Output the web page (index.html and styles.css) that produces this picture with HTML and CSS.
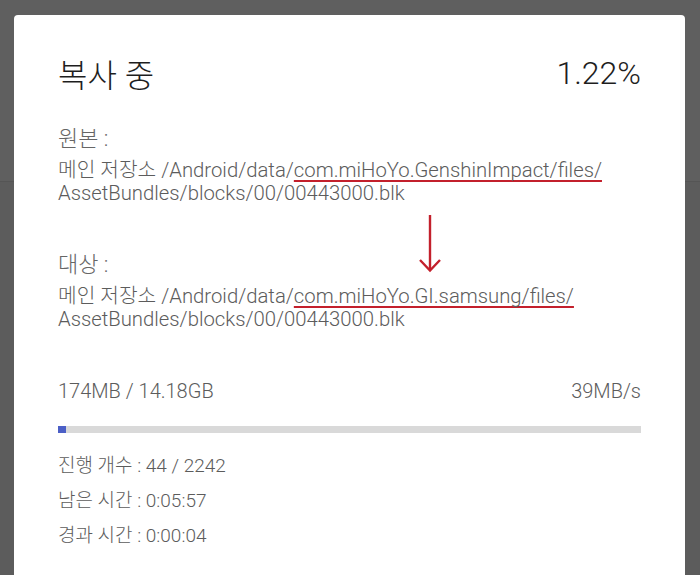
FILE: index.html
```html
<!DOCTYPE html>
<html lang="ko">
<head>
  <meta charset="UTF-8">
  <title>복사 중</title>
  <meta name="viewport" content="width=device-width, initial-scale=1.0">
  <link rel="stylesheet" href="styles.css">
</head>
<body>
<div class="dialog">
  <div class="head">
    <div class="title">복사 중</div>
    <div class="percent">1.22%</div>
  </div>

  <div class="section">
    <div class="label">원본 :</div>
    <div class="path">메인 저장소 /Android/data/<span class="mark">com.miHoYo.GenshinImpact/files/</span><br>AssetBundles/blocks/00/00443000.blk</div>
  </div>

  <svg class="arrow" width="30" height="60" viewBox="0 0 30 60">
    <line x1="15" y1="1" x2="15" y2="56" stroke="#c3202c" stroke-width="2.4"/>
    <polyline points="5,46 15,56.5 25,46" fill="none" stroke="#c3202c" stroke-width="2.4"/>
  </svg>

  <div class="section target">
    <div class="label">대상 :</div>
    <div class="path">메인 저장소 /Android/data/<span class="mark">com.miHoYo.GI.samsung/files/</span><br>AssetBundles/blocks/00/00443000.blk</div>
  </div>

  <div class="size-row">
    <span>174MB / 14.18GB</span>
    <span>39MB/s</span>
  </div>

  <div class="bar"><div class="fill" style="width: 1.22%"></div></div>

  <div class="stats">
    <div>진행 개수 : 44 / 2242</div>
    <div>남은 시간 : 0:05:57</div>
    <div>경과 시간 : 0:00:04</div>
  </div>
</div>
</body>
</html>
```

FILE: styles.css
```css
* { box-sizing: border-box; }
html, body { height: 100%; }
body {
  margin: 0;
  padding: 15px 15px 0 14px;
  overflow: hidden;
  background: linear-gradient(#5f5f5f 181px, #555 181px, #555 182px, #5c5c5c 182px);
  font-family: Roboto, "Noto Sans CJK KR", sans-serif;
  color: #5c5c5c;
}

.dialog {
  position: relative;
  height: 100%;
  background: #fff;
  border-radius: 4px 4px 0 0;
  padding: 39px 44px 0 44px;
}

.head {
  display: flex;
  justify-content: space-between;
  align-items: center;
  height: 38px;
  color: #1e1e1e;
  font-size: 32px;
  font-weight: 300;
}

.section {
  margin-top: 33px;
}

.section.target {
  margin-top: 46px;
}

.label {
  font-size: 22px;
  line-height: 28px;
  margin-bottom: 6px;
  color: #666;
  font-weight: 300;
}

.path {
  font-size: 20.3px;
  line-height: 23px;
  color: #5c5c5c;
  font-weight: 300;
}

.mark {
  text-decoration: underline;
  text-decoration-color: #c3202c;
  text-decoration-thickness: 2px;
  text-decoration-skip-ink: none;
  text-underline-offset: 3px;
}

.arrow {
  position: absolute;
  left: 401px;
  top: 199px;
}

.size-row {
  display: flex;
  justify-content: space-between;
  margin-top: 48px;
  font-size: 20px;
  line-height: 24px;
  font-weight: 300;
}

.bar {
  margin-top: 23px;
  height: 7px;
  background: #d9d9d9;
}

.fill {
  height: 100%;
  min-width: 8px;
  background: #4b5fc6;
}

.stats {
  display: flex;
  flex-direction: column;
  gap: 11px;
  margin-top: 21px;
  font-size: 19px;
  line-height: 24px;
  font-weight: 300;
}
```
